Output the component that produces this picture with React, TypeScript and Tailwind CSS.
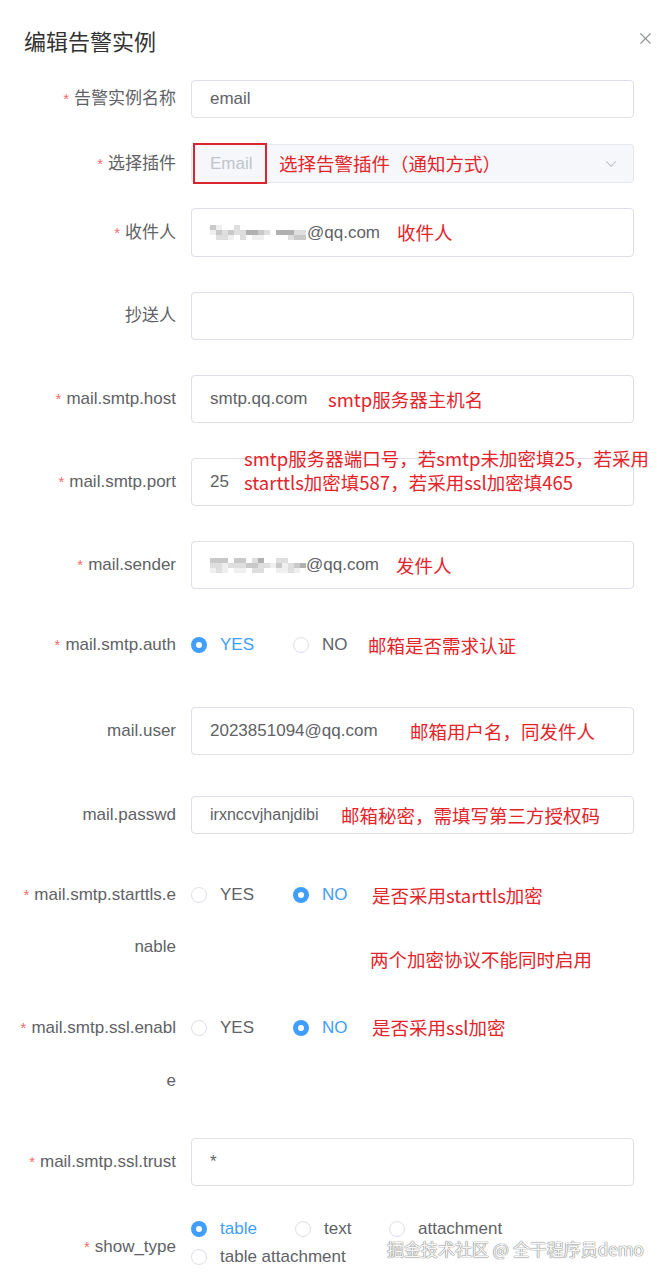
import { X, ChevronDown } from 'lucide-react';
import type { ReactNode } from 'react';

const SHADES: Record<string, string> = {
  '0': '',
  '1': 'bg-[#efefef]',
  '2': 'bg-[#dedede]',
  '3': 'bg-[#c9c9c9]',
  '4': 'bg-[#b0b0b0]',
};

// pixelated redaction of the mailbox prefix
function Mosaic({ rows }: { rows: string[] }) {
  return (
    <div className="flex flex-col">
      {rows.map((row, r) => (
        <div key={r} className="flex">
          {row.split('').map((c, i) => (
            <div key={i} className={`w-[6px] h-[5px] ${SHADES[c]}`} />
          ))}
        </div>
      ))}
    </div>
  );
}

function Label({ req, children }: { req?: boolean; children: ReactNode }) {
  return (
    <div className="w-[176px] shrink-0 text-right text-[17px] text-[#606266]">
      {req && <span className="text-[#f56c6c] text-[15px] mr-[5px]">*</span>}
      {children}
    </div>
  );
}

function Box({ children, muted }: { children?: ReactNode; muted?: boolean }) {
  return (
    <div
      className={`ml-[15px] w-[443px] h-full flex items-center rounded-[4px] border pl-[18px] text-[17px] ${
        muted ? 'bg-[#f5f7fa] border-[#e4e7ed] text-[#c0c4cc]' : 'bg-white border-[#dcdfe6] text-[#606266]'
      }`}
    >
      {children}
    </div>
  );
}

function Note({ className, children }: { className: string; children: ReactNode }) {
  return (
    <span
      className={`absolute whitespace-nowrap text-[18.5px] leading-[24px] text-[#e3242b] font-['Noto_Sans_CJK_SC',sans-serif] ${className}`}
    >
      {children}
    </span>
  );
}

function Radio({ checked, label, className }: { checked?: boolean; label: string; className: string }) {
  return (
    <div className={`flex items-center ${className}`}>
      {checked ? (
        <span className="w-[16px] h-[16px] rounded-full bg-[#409eff] flex items-center justify-center">
          <span className="w-[6px] h-[6px] rounded-full bg-white" />
        </span>
      ) : (
        <span className="w-[16px] h-[16px] rounded-full border border-[#dcdfe6] bg-white" />
      )}
      <span className={`ml-[13px] text-[17px] ${checked ? 'text-[#409eff]' : 'text-[#606266]'}`}>{label}</span>
    </div>
  );
}

export default function App() {
  return (
    <div className="relative w-[669px] h-[1280px] overflow-hidden bg-white font-['Liberation_Sans','Noto_Sans_CJK_SC',sans-serif]">
      {/* Header */}
      <div className="h-[80px] flex items-center justify-between pl-[24px] pr-[14px]">
        <h1 className="text-[22px] text-[#333333] font-['Noto_Sans_CJK_SC',sans-serif]">编辑告警实例</h1>
        <X className="w-[19px] h-[19px] text-[#909399] -mt-[4px]" strokeWidth={1.4} />
      </div>

      {/* Form */}
      <div className="flex flex-col">
        <div className="relative flex items-center h-[38px]">
          <Label req>告警实例名称</Label>
          <Box>email</Box>
        </div>

        <div className="relative flex items-center h-[39px] mt-[26px]">
          <Label req>选择插件</Label>
          <Box muted>
            <span className="flex-1">Email</span>
            <ChevronDown className="w-[18px] h-[18px] text-[#b4b8bf] mr-[13px]" strokeWidth={1.4} />
          </Box>
          <div className="absolute left-[193px] top-[-1px] w-[74px] h-[41px] border-2 border-[#d9262e]" />
          <Note className="left-[279px] top-[7px]">选择告警插件（通知方式）</Note>
        </div>

        <div className="relative flex items-center h-[49px] mt-[25px]">
          <Label req>收件人</Label>
          <Box>
            <Mosaic rows={['3100200000000000', '1323224432044422', '0221020110000233']} />
            <span className="ml-[1px]">@qq.com</span>
          </Box>
          <Note className="left-[397px] top-[12px]">收件人</Note>
        </div>

        <div className="relative flex items-center h-[48px] mt-[35px]">
          <Label>抄送人</Label>
          <Box />
        </div>

        <div className="relative flex items-center h-[48px] mt-[35px]">
          <Label req>mail.smtp.host</Label>
          <Box>smtp.qq.com</Box>
          <Note className="left-[328px] top-[12px]">smtp服务器主机名</Note>
        </div>

        <div className="relative flex items-center h-[48px] mt-[35px]">
          <Label req>mail.smtp.port</Label>
          <Box>25</Box>
          <Note className="left-[244px] top-[-12px]">
            smtp服务器端口号，若smtp未加密填25，若采用
            <br />
            starttls加密填587，若采用ssl加密填465
          </Note>
        </div>

        <div className="relative flex items-center h-[48px] mt-[35px]">
          <Label req>mail.sender</Label>
          <Box>
            <Mosaic rows={['3330330240022000', '2212223322131234', '1210110220011210']} />
            <span>@qq.com</span>
          </Box>
          <Note className="left-[396px] top-[12px]">发件人</Note>
        </div>

        <div className="relative flex items-center h-[40px] mt-[36px]">
          <Label req>mail.smtp.auth</Label>
          <div className="ml-[15px] flex items-center">
            <Radio checked label="YES" className="w-[102px]" />
            <Radio label="NO" className="w-[90px]" />
          </div>
          <Note className="left-[368px] top-[8px]">邮箱是否需求认证</Note>
        </div>

        <div className="relative flex items-center h-[48px] mt-[42px]">
          <Label>mail.user</Label>
          <Box>2023851094@qq.com</Box>
          <Note className="left-[410px] top-[12px]">邮箱用户名，同发件人</Note>
        </div>

        <div className="relative flex items-center h-[38px] mt-[41px]">
          <Label>mail.passwd</Label>
          <Box>
            <span className="text-[16px]">irxnccvjhanjdibi</span>
          </Box>
          <Note className="left-[341px] top-[7px]">邮箱秘密，需填写第三方授权码</Note>
        </div>

        <div className="relative flex items-start mt-[35px]">
          <div className="leading-[52px]">
            <Label req>
              mail.smtp.starttls.e
              <br />
              nable
            </Label>
          </div>
          <div className="ml-[15px] h-[52px] flex items-center">
            <Radio label="YES" className="w-[102px]" />
            <Radio checked label="NO" className="w-[90px]" />
          </div>
          <Note className="left-[372px] top-[14px]">是否采用starttls加密</Note>
          <Note className="left-[370px] top-[78px]">两个加密协议不能同时启用</Note>
        </div>

        <div className="relative flex items-start mt-[28px]">
          <div className="leading-[53px]">
            <Label req>
              mail.smtp.ssl.enabl
              <br />
              e
            </Label>
          </div>
          <div className="ml-[15px] h-[53px] flex items-center">
            <Radio label="YES" className="w-[102px]" />
            <Radio checked label="NO" className="w-[90px]" />
          </div>
          <Note className="left-[372px] top-[14px]">是否采用ssl加密</Note>
        </div>

        <div className="relative flex items-center h-[48px] mt-[31px]">
          <Label req>mail.smtp.ssl.trust</Label>
          <Box>*</Box>
        </div>

        <div className="relative flex items-start mt-[29px]">
          <div className="mt-[18px] leading-[28px]">
            <Label req>show_type</Label>
          </div>
          <div className="ml-[15px] flex flex-col">
            <div className="h-[28px] flex items-center">
              <Radio checked label="table" className="w-[104px]" />
              <Radio label="text" className="w-[94px]" />
              <Radio label="attachment" className="w-[140px]" />
            </div>
            <div className="h-[27px] flex items-center">
              <Radio label="table attachment" className="w-[200px]" />
            </div>
          </div>
        </div>
      </div>

      {/* watermark */}
      <div className="absolute left-[387px] top-[1240px] text-[17px] leading-[18px] text-[#f7f7f7] font-['Noto_Sans_CJK_SC',sans-serif] [text-shadow:0_0_1px_#8a8a8a,0_0_1px_#8a8a8a,0_0_1px_#8a8a8a]">
        掘金技术社区 @ 全干程序员demo
      </div>
    </div>
  );
}
